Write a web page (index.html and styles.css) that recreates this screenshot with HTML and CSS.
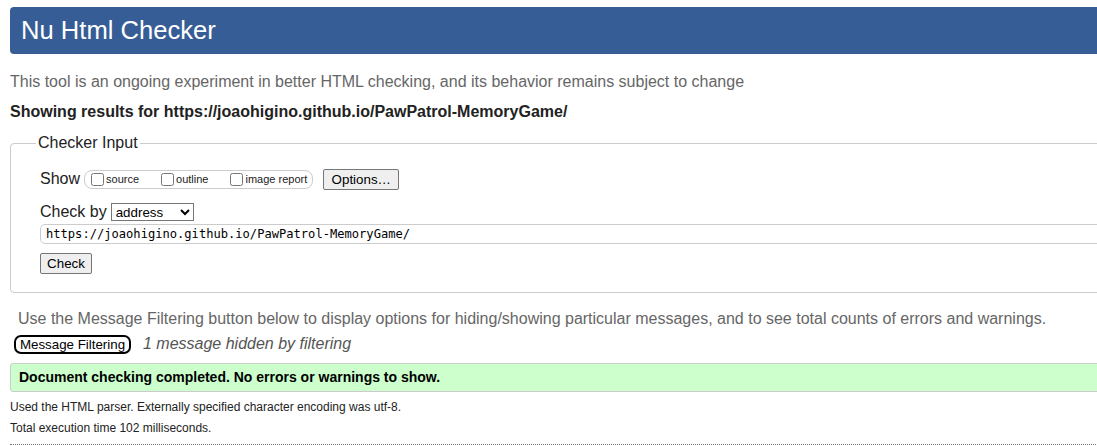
FILE: index.html
```html
<!DOCTYPE html>
<html lang="en">
<head>
<meta charset="utf-8">
<title>Nu Html Checker</title>
<link rel="stylesheet" href="styles.css">
</head>
<body>
<div class="page">
  <h1 class="title">Nu Html Checker</h1>
  <p class="intro">This tool is an ongoing experiment in better HTML checking, and its behavior remains subject to change</p>
  <p class="results-for">Showing results for https://joaohigino.github.io/PawPatrol-MemoryGame/</p>
  <fieldset class="input-box">
    <legend class="legend">Checker Input</legend>
    <div class="row show-row">
      <span class="label">Show</span>
      <span class="options-group">
        <label class="opt"><input type="checkbox" class="cb"><span>source</span></label>
        <label class="opt"><input type="checkbox" class="cb"><span>outline</span></label>
        <label class="opt"><input type="checkbox" class="cb"><span>image report</span></label>
      </span>
      <button class="btn btn-options" type="button">Options…</button>
    </div>
    <div class="row checkby-row">
      <span class="label">Check by</span>
      <select class="select"><option>address</option></select>
    </div>
    <div class="url">https://joaohigino.github.io/PawPatrol-MemoryGame/</div>
    <button class="btn btn-check" type="button">Check</button>
  </fieldset>
  <p class="filter-note">Use the Message Filtering button below to display options for hiding/showing particular messages, and to see total counts of errors and warnings.</p>
  <div class="filter-row">
    <button class="btn-filter" type="button">Message Filtering</button>
    <span class="hidden-note">1 message hidden by filtering</span>
  </div>
  <div class="success">Document checking completed. No errors or warnings to show.</div>
  <p class="small small-first">Used the HTML parser. Externally specified character encoding was utf-8.</p>
  <p class="small">Total execution time 102 milliseconds.</p>
  <div class="dotted"></div>
</div>
</body>
</html>
```
FILE: styles.css
```css
html, body {
  margin: 0;
  padding: 0;
  overflow: hidden;
  background: #fff;
}
body {
  font-family: "Liberation Sans", Arial, sans-serif;
  color: #222;
}
.page {
  width: 1200px;
  padding: 7px 0 0 10px;
}
.title {
  margin: 0;
  height: 47px;
  box-sizing: border-box;
  padding: 0 0 0 11px;
  background: #365d95;
  color: #fff;
  border-radius: 4px;
  font-size: 25.6px;
  font-weight: normal;
  line-height: 47px;
}
.intro {
  margin: 18px 0 0 0;
  font-size: 16px;
  line-height: 20px;
  color: #666;
}
.results-for {
  margin: 10px 0 0 0;
  font-size: 16px;
  line-height: 20px;
  font-weight: bold;
  color: #222;
}
.input-box {
  margin: 12px 0 0 0;
  padding: 0 0 18px 29px;
  border: 1px solid #ccc;
  border-radius: 4px;
}
.legend {
  margin-left: -4px;
  padding: 0 2px;
  font-size: 16px;
  color: #222;
}
.row {
  display: flex;
  align-items: center;
}
.show-row {
  margin-top: 16px;
  height: 22px;
}
.label {
  font-size: 16px;
  color: #222;
}
.options-group {
  display: inline-flex;
  align-items: center;
  height: 19px;
  box-sizing: border-box;
  margin-left: 4px;
  padding: 0 5px 0 6px;
  border: 1px solid #ccc;
  border-radius: 8px;
  gap: 22px;
}
.opt {
  display: inline-flex;
  align-items: center;
  font-size: 11px;
  color: #222;
}
.cb {
  margin: 0 2px 0 0;
  width: 13px;
  height: 13px;
}
.btn {
  font-family: "Liberation Sans", Arial, sans-serif;
  font-size: 13.33px;
  color: #000;
  background: #efefef;
  border: 1px solid #767676;
  border-radius: 2px;
  padding: 0 6px;
  height: 21px;
  white-space: nowrap;
}
.btn-options {
  margin-left: 10px;
  width: 76px;
}
.checkby-row {
  margin-top: 12px;
  height: 20px;
}
.select {
  margin-left: 4px;
  width: 83px;
  height: 18px;
  font-family: "Liberation Sans", Arial, sans-serif;
  font-size: 13.33px;
  border: 1px solid #767676;
  border-radius: 0;
  background: #fff;
  color: #000;
  padding: 0;
}
.url {
  margin-top: 2px;
  height: 20px;
  box-sizing: border-box;
  border: 1px solid #ccc;
  border-radius: 5px;
  padding: 0 5px;
  font-family: "DejaVu Sans Mono", monospace;
  font-size: 12.1px;
  line-height: 18px;
  color: #000;
}
.btn-check {
  margin-top: 9px;
  width: 52px;
  display: block;
}
.filter-note {
  margin: 16px 0 0 8px;
  font-size: 16px;
  line-height: 20px;
  color: #666;
}
.filter-row {
  display: flex;
  align-items: center;
  margin-top: 5px;
  margin-left: 4px;
  height: 20px;
}
.btn-filter {
  font-family: "Liberation Sans", Arial, sans-serif;
  font-size: 13.33px;
  color: #000;
  background: #fff;
  border: 2px solid #000;
  border-radius: 7px;
  height: 19px;
  width: 117px;
  padding: 0;
  white-space: nowrap;
  box-sizing: border-box;
  line-height: 15px;
}
.hidden-note {
  margin-left: 12px;
  font-size: 16px;
  font-style: italic;
  color: #555;
}
.success {
  margin-top: 9px;
  height: 29px;
  box-sizing: border-box;
  border: 1px solid #ccc;
  border-radius: 3px 0 0 3px;
  background: #ccffcc;
  padding: 0 0 0 8px;
  font-size: 14px;
  font-weight: bold;
  line-height: 27px;
  color: #000;
}
.small {
  margin: 6px 0 0 0;
  font-size: 12px;
  line-height: 15px;
  color: #222;
}
.small-first {
  margin-top: 8px;
}
.dotted {
  margin-top: 8px;
  border-top: 1px dotted #777;
  height: 0;
}
```
